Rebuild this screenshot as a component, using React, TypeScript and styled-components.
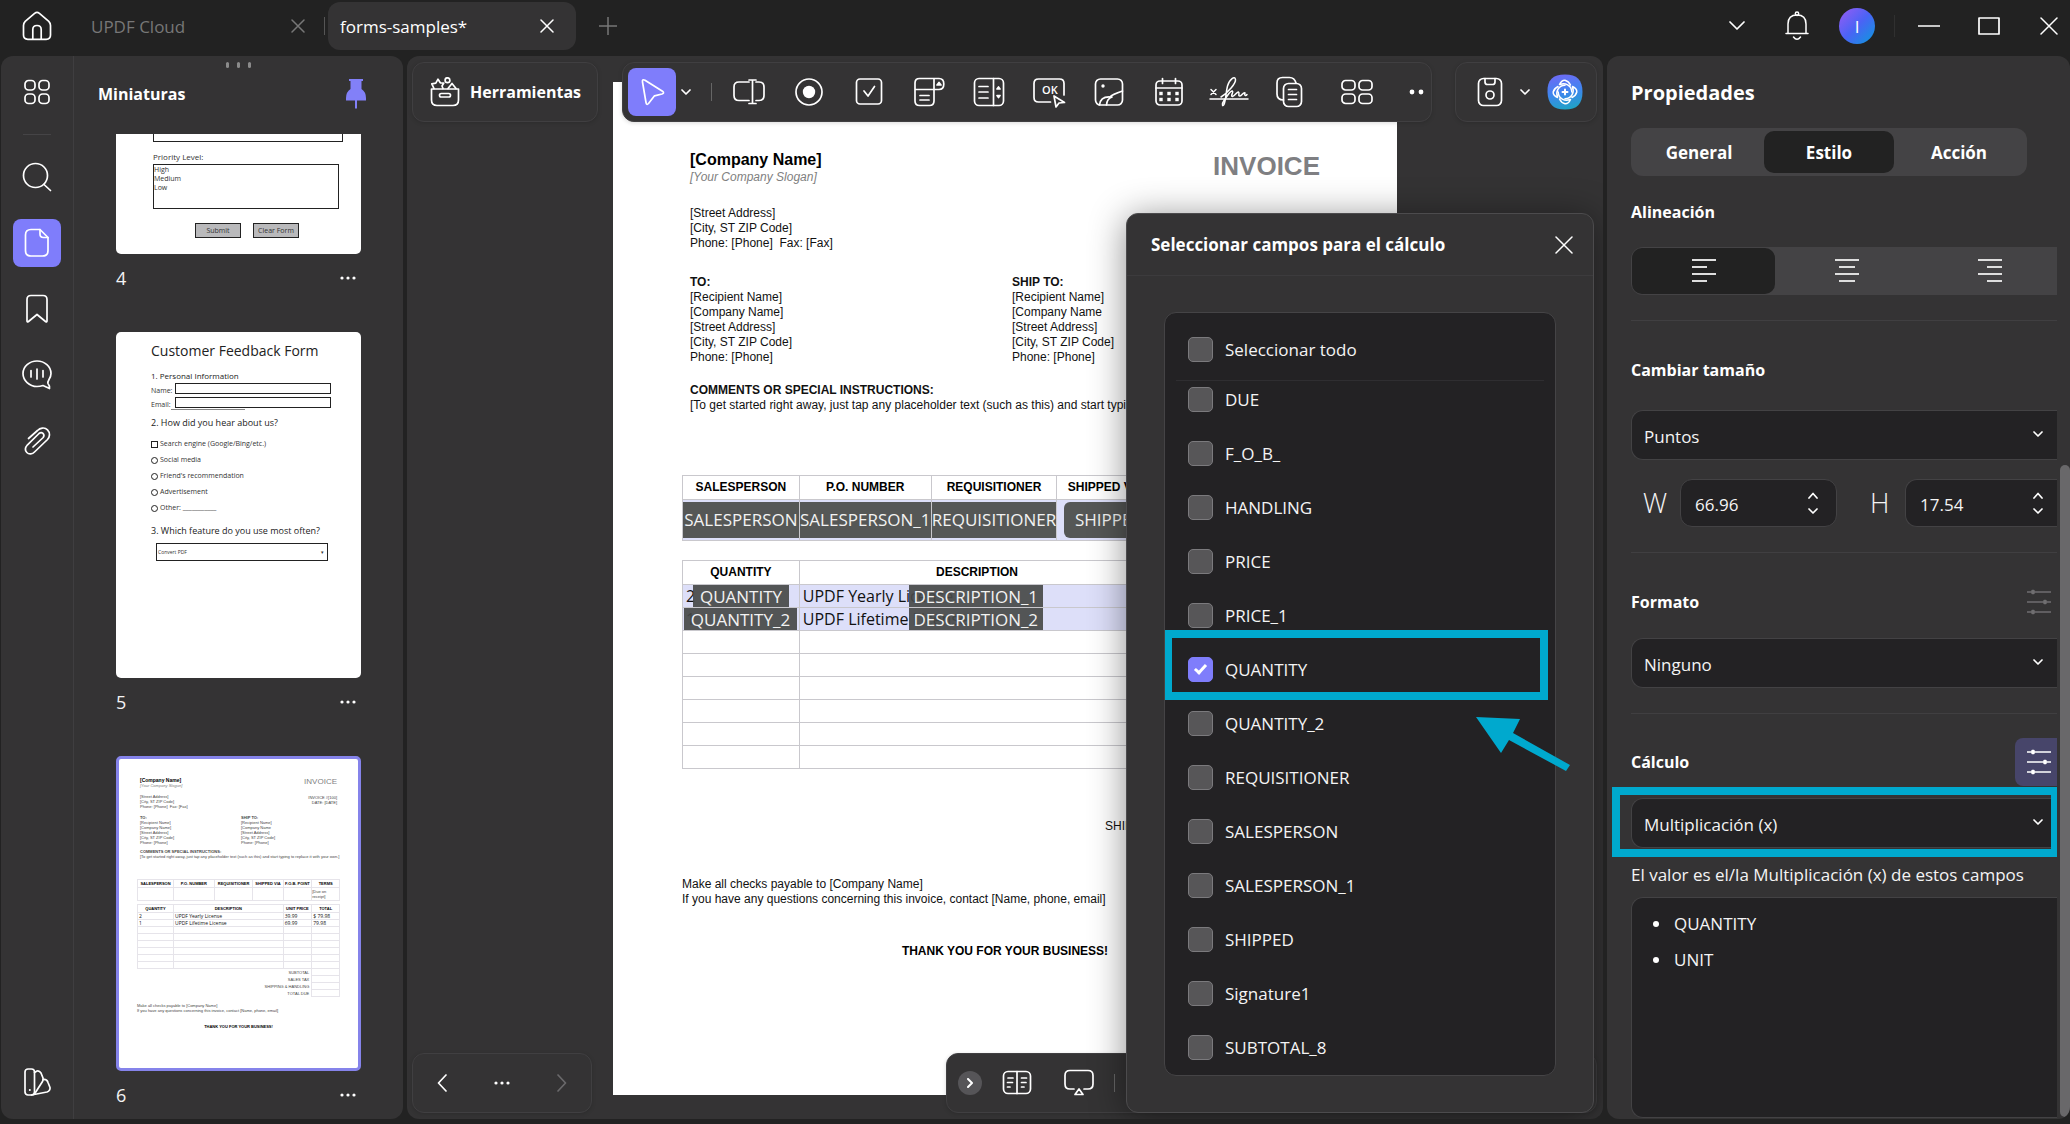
import React, { useState } from "react";
import styled, { createGlobalStyle, css, ThemeProvider } from "styled-components";

const UI = `"Open Sans", "Noto Sans", sans-serif`;
const DOC = `"Liberation Sans", Arial, sans-serif`;

const c = {
  bg: "#222222",
  panel: "#343334",
  line: "#434244",
  well: "#232224",
  accent: "#7f7dfb",
  mark: "#00a9ce",
  text: "#f4f4f4",
};

const GlobalStyle = createGlobalStyle`
  *, *::before, *::after { box-sizing: border-box; }
  html, body, #root { height: 100%; margin: 0; }
  body { background: ${c.bg}; color: ${c.text}; font-family: ${UI}; font-size: 17px; overflow: hidden; }
  button, input, select { font: inherit; color: inherit; }
  button { background: none; border: 0; padding: 0; margin: 0; flex: none; }
  svg { display: block; flex: none; }
  h1, h2, h3, p, ul, figure { margin: 0; padding: 0; }
`;

/* ---------- icons ---------- */

type IconProps = { w?: number; h?: number; sw?: number; color?: string; children: React.ReactNode };
const Icon = ({ w = 30, h = 30, sw = 1.7, color = "#fff", children }: IconProps) => (
  <svg width={w} height={h} viewBox={`0 0 ${w} ${h}`} fill="none" stroke={color} strokeWidth={sw} strokeLinecap="round" strokeLinejoin="round" aria-hidden="true">
    {children}
  </svg>
);

const Chevron = ({ dir = "down", color = "#fff", size = 10 }: { dir?: "down" | "up"; color?: string; size?: number }) => (
  <Icon w={size} h={size / 2 + 2} color={color}>
    {dir === "down" ? <path d={`M1 1L${size / 2} ${size / 2}L${size - 1} 1`} /> : <path d={`M1 ${size / 2 + 1}L${size / 2} 1.5L${size - 1} ${size / 2 + 1}`} />}
  </Icon>
);

const Cross = ({ size = 14, color = "#fff" }: { size?: number; color?: string }) => (
  <Icon w={size} h={size} color={color} sw={1.5}>
    <path d={`M1 1L${size - 1} ${size - 1}M${size - 1} 1L1 ${size - 1}`} />
  </Icon>
);

const Dots = ({ color = "#fff" }: { color?: string }) => (
  <Icon w={18} h={6} color={color}>
    {[3, 9, 15].map((x) => <circle key={x} cx={x} cy={3} r={1.6} fill={color} stroke="none" />)}
  </Icon>
);

const HomeIcon = () => (
  <Icon>
    <path d="M1.5 14.5Q1.5 12 3.2 10.3L12.6 2.3Q15 .4 17.4 2.3L26.8 10.3Q28.5 12 28.5 14.5V24Q28.5 28.3 24.2 28.3H5.8Q1.5 28.3 1.5 24Z" />
    <path d="M10.8 28V18.5Q10.8 14.5 15 14.5T19.2 18.5V28" />
  </Icon>
);
const GridIcon = ({ wide }: { wide?: boolean }) => (
  <Icon w={32} h={26}>
    {(wide ? [1, 18] : [4, 18]).map((x) =>
      [1.5, 15].map((y) => <rect key={`${x}-${y}`} x={x} y={y} width={wide ? 13 : 10} height={9.5} rx={3.6} />),
    )}
  </Icon>
);
const SearchIcon = () => (
  <Icon><circle cx="13.5" cy="13.5" r="12" /><path d="M22 22.5L28.5 28.5" /></Icon>
);
const PageIcon = () => (
  <Icon>
    <path d="M18 1.5H9Q3.5 1.5 3.5 7V22.5Q3.5 28 9 28H20.5Q26 28 26 22.5V9.5Z" />
    <path d="M18 1.5V6Q18 9.5 21.5 9.5H26" />
  </Icon>
);
const BookmarkIcon = () => (
  <Icon><path d="M5 27V5.5Q5 1.5 9 1.5H21Q25 1.5 25 5.5V27Q25 28.5 23.5 27.5L15 20.5L6.5 27.5Q5 28.5 5 27Z" /></Icon>
);
const CommentIcon = () => (
  <Icon>
    <path d="M27 19.5Q29 16.500 29 13.5C29 6.6 22.7 1 15 1S1 6.6 1 13.5S7.3 26.5 15 26.5Q18 26.5 21 25.5L27.5 28.5Q28 26 26 23.5Q25.5 22 27 19.5Z" />
    <path d="M9 10.5V17M15 9V19M21 10.5V17" />
  </Icon>
);
const ClipIcon = () => (
  <Icon>
    <path d="M6.5 12.5L15.5 4.5C18 2 22.5 .8 25.5 3.8S27.8 11 25.5 13.5L12.5 26C10.5 28.2 7 28.8 4.8 26.5S3.6 21 5.5 18.8L17 7.5Q19.2 5.7 21 7.4T21.2 11.5L11 21" />
  </Icon>
);
const SwatchIcon = () => (
  <Icon>
    <rect x="3" y="2" width="9.5" height="26" rx="3" />
    <circle cx="7.8" cy="23" r="1" fill="#fff" stroke="none" />
    <path d="M12.5 5.5L15 4Q17.5 3.5 19 6L21 11Q21.5 13 20.5 14.5L12.5 27" />
    <path d="M21 12.5Q25 12 26 15.5L28 20.5Q28.5 23.5 25 25L9.5 28" />
  </Icon>
);
const PinIcon = () => (
  <svg width="20" height="30" viewBox="0 0 20 30" fill="#8280f8" aria-hidden="true">
    <path d="M3 0H17V2H15.5V10Q20 13 20 19V21.500H11V29.5H9V21.5H0V19Q0 13 4.5 10V2H3Z" />
  </svg>
);
const ToolboxIcon = () => (
  <Icon>
    <path d="M1.5 12H28.5V23Q28.5 28.5 23 28.5H7Q1.5 28.5 1.5 23Z" />
    <rect x="9.5" y="16.5" width="11" height="3.5" rx="1.7" />
    <path d="M4 11.5L1.8 6.8L5.8 6.2L8 2.2L10.3 5.8L13.8 6L12 9L13 11.5M18 11.5L22 6.5L26 11.500" />
    <circle cx="17.5" cy="3.2" r="2.4" />
  </Icon>
);
const PointerIcon = () => (
  <Icon><path d="M5.5 5Q5 1.8 8 3.2L25.500 14.2Q27.8 16 25 17L17.5 18.8L11.5 26.5Q9.5 28.5 9 25.500Z" /></Icon>
);
const TextFieldIcon = () => (
  <Icon w={34}>
    <path d="M17 5H7Q2 5 2 10V18.500Q2 23.5 7 23.5H17M24 5H27Q32 5 32 10V18.5Q32 23.500 27 23.5H24M17 3H24M17 26.5H24M20.5 3V26.5" />
  </Icon>
);
const RadioIcon = () => (
  <Icon><circle cx="15" cy="15" r="13" /><circle cx="15" cy="15" r="6.2" fill="#fff" stroke="none" /></Icon>
);
const CheckIcon = () => (
  <Icon><rect x="2.5" y="2" width="25" height="25" rx="3.5" /><path d="M10 14L14 19L20.5 9.5" /></Icon>
);
const ComboIcon = () => (
  <Icon w={32}>
    <path d="M26 12.5H2V6Q2 1.500 6.5 1.5H26Q30.8 1.5 30.8 7T26 12.5M21 1.5V12.5M2 12.5V24Q2 28.5 6.5 28.5H16.5Q21 28.5 21 24V12.5M7 18.5H16M7 23H16" />
    <path d="M24 8L26 5.5L28 8Z" fill="#fff" />
  </Icon>
);
const ListIcon = () => (
  <Icon w={32}>
    <rect x="1.5" y="1.5" width="29" height="27" rx="4.5" />
    <path d="M20.5 1.5V28.5M6 9.5H15M6 15H15M6 21H15" />
    <path d="M24 12L25.5 10L27 12ZM24 18.5L25.5 20.5L27 18.500Z" fill="#fff" />
  </Icon>
);
const OkText = styled.text`
  font: 600 11px ${UI};
  fill: #fff;
  stroke: none;
`;
const OkIcon = () => (
  <Icon w={34} h={32}>
    <path d="M18.5 26H6.5Q2 26 2 21.5V7.5Q2 3 6.5 3H27.5Q32 3 32 7.5V19" />
    <OkText x="10" y="18">OK</OkText>
    <path d="M22 20L24 31L27 27L32.5 26.5Z" fill={c.panel} />
  </Icon>
);
const ImageIcon = () => (
  <Icon>
    <rect x="1.5" y="2" width="27" height="26" rx="5" />
    <circle cx="9" cy="9" r="1.7" fill="#fff" stroke="none" />
    <path d="M5.5 28Q6.5 19.5 16 20Q18 17.5 28.5 14M12.5 28Q13 21.5 18 20" />
  </Icon>
);
const CalendarIcon = () => (
  <Icon>
    <rect x="2" y="4" width="26" height="24" rx="4" /><path d="M2 11H28M8.5 1.5V6.5M21.5 1.5V6.5" />
    {[7, 15, 23].map((x) => [16.5, 22.5].map((y) => <rect key={`${x}${y}`} x={x - 1.7} y={y - 1.7} width="3.4" height="3.4" fill="#fff" stroke="none" />))}
  </Icon>
);
const SignIcon = () => (
  <Icon w={40} h={32} sw={1.5}>
    <path d="M2 13.5L7 18.5M7 13.5L2 18.5M1 23H39" />
    <path d="M12 21C19 17 27 7 26.5 3.5C26 -.5 20.5 3 18.5 10C16.5 18 17 24 15 28.5C13.5 31.500 12.5 28 15 24.500C19 19 21 14.5 23.5 15C25 16 21 20 23.5 20.5C26 20 28 15.5 29.5 16C31 17 28.500 20 31 20C33 20 34 16 36 17C35 20 37 20 38 18.5" />
  </Icon>
);
const CopyIcon = () => (
  <Icon h={32}>
    <path d="M9.5 24Q3 24 3 18V7Q3 1.500 8.5 1.5H15.5Q20.5 1.5 22 7" />
    <rect x="9.5" y="7.5" width="18" height="23" rx="5" /><path d="M14.5 13.5H22.5M14.5 18.5H22.5M14.5 23.5H22.5" />
  </Icon>
);
const SaveIcon = () => (
  <Icon w={26}>
    <rect x="1.5" y="1.5" width="23" height="27" rx="5" /><path d="M8 1.5V5Q8 7.500 10.5 7.5H15.5Q18 7.5 18 5V1.5" /><circle cx="13" cy="18" r="4" />
  </Icon>
);
const AiIcon = () => (
  <svg width="36" height="36" viewBox="0 0 36 36" fill="none" aria-hidden="true">
    <defs>
      <linearGradient id="ai" x1="0.4" y1="0" x2="0.6" y2="1"><stop offset="0" stopColor="#6d6bf5" /><stop offset=".5" stopColor="#3f86ef" /><stop offset="1" stopColor="#1fa3c4" /></linearGradient>
    </defs>
    <path d="M18 .5C30 .5 35.5 6 35.5 18S30 35.5 18 35.500S1 30 .5 18S6 .5 18 .5Z" fill="url(#ai)" />
    <g stroke="#fff" strokeWidth="1.5" strokeLinecap="round" strokeLinejoin="round">
      {[0, 90, 180, 270].map((a) => <path key={a} transform={`rotate(${a} 18 18)`} d="M12.500 10.500Q14.500 6 18 6.200Q21.500 7 23.500 11M13 10.500C18 8.500 24.500 11 24.800 18" />)}
      <path d="M18 15.5V20.5M15.5 18H20.5" strokeWidth="2" />
    </g>
  </svg>
);
const BellIcon = () => (
  <Icon w={24} sw={1.5}>
    <path d="M1 22.5H23M3 22.5V13Q3 4 12 4T21 13V22.5M8.5 26Q12 30.5 15.5 26" /><circle cx="12" cy="2.7" r="1.7" />
  </Icon>
);
const BookIcon = () => (
  <Icon h={26}>
    <rect x="1.5" y="1.5" width="27" height="22" rx="4.5" />
    <path d="M15 1.5V23.5M6 8H11M5.5 12.500H10.5M5.5 17H8M19.5 8H24.5M19.5 12.500H24M19.5 17H22" />
  </Icon>
);
const PresentIcon = () => (
  <Icon h={28}>
    <path d="M10 20H6Q1 20 1 15V6.5Q1 1.5 6 1.5H24Q29 1.5 29 6.5V15Q29 20 24 20H20M15 20L19 25.5H11Z" />
  </Icon>
);
const SlidersIcon = ({ color = "#fff" }: { color?: string }) => (
  <Icon w={24} h={26} color={color} sw={1.7}>
    <path d="M0 3H24M0 13H24M0 23H24" strokeLinecap="butt" />
    {[[6, 3], [18, 13], [6, 23]].map(([x, y]) => <rect key={y} x={x - 1.7} y={y - 2.2} width="3.4" height="4.4" rx="1" fill={color} stroke="none" />)}
  </Icon>
);
const AlignIcon = ({ rows }: { rows: number[][] }) => (
  <Icon w={24} h={26} color="#dedede" sw={2}>
    {rows.map(([a, b], i) => <path key={i} d={`M${a} ${2 + i * 7}H${b}`} strokeLinecap="butt" />)}
  </Icon>
);

/* ---------- shell ---------- */

const Shell = styled.div`
  display: flex;
  flex-direction: column;
  height: 100vh;
  background: ${c.bg};
`;
const TitleBar = styled.header`
  display: flex;
  align-items: center;
  height: 52px;
  flex: none;
  padding-left: 22px;
  margin-bottom: 4px;
`;
const Tab = styled.div<{ $active?: boolean }>`
  display: flex;
  align-items: center;
  justify-content: space-between;
  width: ${(p) => (p.$active ? 248 : 242)}px;
  height: 48px;
  padding: 0 ${(p) => (p.$active ? 22 : 16)}px 0 12px;
  border-radius: 12px;
  color: ${(p) => (p.$active ? "#fff" : "#777")};
  background: ${(p) => (p.$active ? c.panel : "transparent")};
`;
const Tabs = styled.nav`
  display: flex;
  align-items: center;
  margin-left: 27px;
  gap: 3px;
  flex: 1;
`;
const VLine = styled.span<{ $h: number }>`
  width: 1px;
  height: ${(p) => p.$h}px;
  background: #555;
  flex: none;
`;
const NewTab = styled.button`
  padding: 0 20px;
`;
const WindowGroup = styled.div`
  display: flex;
  align-items: center;
  gap: 18px;
`;
const WindowButton = styled.button`
  display: grid;
  place-items: center;
  width: 42px;
  height: 42px;
`;
const WindowSep = styled.span`
  width: 1px;
  height: 22px;
  margin: 0 13px 0 16px;
  background: #303030;
`;
const Avatar = styled.span`
  display: grid;
  place-items: center;
  width: 36px;
  height: 36px;
  border-radius: 50%;
  color: #fff;
  background: linear-gradient(135deg, #9a5cf4, #4a63f5 50%, #0a9bdc);
`;
const Body = styled.div`
  display: flex;
  flex: 1;
  min-height: 0;
  padding: 0 0 5px 1px;
  gap: 4px;
`;
const LeftPanel = styled.div`
  display: flex;
  width: 402px;
  flex: none;
  background: ${c.panel};
  border-radius: 12px;
  overflow: hidden;
`;
const Rail = styled.nav`
  display: flex;
  flex-direction: column;
  align-items: center;
  gap: 18px;
  width: 73px;
  padding: 12px 0 13px;
  border-right: 1px solid #3f3e40;
`;
const RailButton = styled.button<{ $active?: boolean; $last?: boolean }>`
  display: grid;
  place-items: center;
  width: 48px;
  height: 48px;
  border-radius: 8px;
  background: ${(p) => (p.$active ? c.accent : "transparent")};
  margin-top: ${(p) => (p.$last ? "auto" : "0")};
`;
const RailLine = styled.span`
  width: 28px;
  height: 1px;
  background: #454446;
`;

const Thumbs = styled.aside`
  display: flex;
  flex-direction: column;
  flex: 1;
  min-width: 0;
`;
const ThumbHead = styled.div`
  height: 78px;
  flex: none;
`;
const Handle = styled.div`
  display: flex;
  justify-content: center;
  gap: 8px;
  height: 18px;
  padding-top: 6px;
  span { width: 3px; height: 6px; border-radius: 2px; background: #8b8b8b; }
`;
const ThumbTitle = styled.div`
  display: flex;
  align-items: center;
  justify-content: space-between;
  height: 40px;
  padding: 0 37px 0 24px;
`;
const Heading = styled.h2<{ $size?: number }>`
  font-size: ${(p) => p.$size || 16}px;
  line-height: 24px;
  font-weight: 700;
  color: #fff;
`;
const ThumbList = styled.div`
  flex: 1;
  min-height: 0;
  overflow: hidden;
  padding: 0 42px;
`;
const Sheet = styled.div<{ $h: number; $selected?: boolean; $cut?: boolean }>`
  height: ${(p) => p.$h}px;
  overflow: hidden;
  background: #fff;
  color: #333;
  border-radius: ${(p) => (p.$cut ? "0 0 5px 5px" : "5px")};
  ${(p) => p.$selected && css`border: 3px solid #8583ea;`}
`;
const Caption = styled.figcaption`
  display: flex;
  align-items: center;
  justify-content: space-between;
  height: 48px;
  margin-bottom: 30px;
  padding-right: 4px;
  font-size: 18px;
`;

/* page 4 preview */
const TicketPage = styled.div`
  padding: 0 20px 0 37px;
  font-size: 8px;
  line-height: 10px;
`;
const TicketTop = styled.div`
  height: 8px;
  width: 190px;
  border: 1px solid #222;
  border-top: 0;
  margin-bottom: 10px;
`;
const TicketBox = styled.div`
  width: 186px;
  height: 45px;
  margin-top: 2px;
  border: 1px solid #222;
  font-size: 7px;
  line-height: 9px;
`;
const TicketActions = styled.div`
  display: flex;
  gap: 12px;
  padding: 14px 0 0 42px;
  span {
    width: 46px;
    height: 15px;
    border: 1px solid #222;
    background: #b9b9bb;
    font-size: 7px;
    line-height: 13px;
    text-align: center;
  }
`;

/* page 5 preview */
const FeedbackPage = styled.div`
  padding: 10px 30px 0 35px;
  font-size: 7px;
  line-height: 10px;
`;
const FTitle = styled.div`
  font-size: 14px;
  line-height: 18px;
  color: #222;
  white-space: nowrap;
`;
const FQuestion = styled.div<{ $size: number; $mt: number }>`
  margin-top: ${(p) => p.$mt}px;
  font-size: ${(p) => p.$size}px;
  line-height: 12px;
  color: #222;
  white-space: nowrap;
`;
const FLine = styled.div<{ $ruled?: boolean }>`
  position: relative;
  display: flex;
  align-items: flex-end;
  justify-content: space-between;
  height: 14px;
  span { width: 156px; height: 11px; border: 1px solid #222; margin-bottom: 2px; }
  ${(p) => p.$ruled && css`
    &::after { content: ""; position: absolute; left: 20px; bottom: 0; width: 74px; height: 1px; background: #888; }
  `}
`;
const FOptions = styled.div`
  display: grid;
  gap: 6px;
  margin: 10px 0 12px;
  line-height: 10px;
`;
const FOption = styled.div<{ $round?: boolean }>`
  display: flex;
  align-items: center;
  gap: 2px;
  &::before {
    content: "";
    width: 7px;
    height: 7px;
    border: 1px solid #222;
    border-radius: ${(p) => (p.$round ? "50%" : "0")};
  }
`;
const FSelect = styled.div`
  display: flex;
  justify-content: space-between;
  margin: 6px 0 0 5px;
  padding: 0 3px 0 1px;
  height: 18px;
  width: 172px;
  border: 1px solid #222;
  font-size: 5px;
  line-height: 16px;
`;

/* ---------- invoice document: one component at page and preview size ---------- */

const fullSize = {
  padTop: 69, padX: 77, tableL: 69, tableR: 59, company: 16, companyLh: 18, text: 12, lh: 15, slogan: 16, title: 26, titleLh: 30, titleW: 700, metaGap: 28,
  gapAddr: 21, gapTo: 24, shipLeft: 322, gapComments: 18, gapTable: 62, head: 24, fieldRow: 41, gapTables: 19, row: 23, value: 16,
  gapChecks: 16, gapThanks: 37, pad: 3, sumPad: 8, ink: "#111", rule: "#c9c8cd", tint: "#dddff9",
};
const miniSize: typeof fullSize = {
  padTop: 18, padX: 21, tableL: 18, tableR: 18, company: 5, companyLh: 6, text: 4, lh: 5, slogan: 5, title: 8, titleLh: 10, titleW: 400, metaGap: 8,
  gapAddr: 6, gapTo: 6, shipLeft: 101, gapComments: 4, gapTable: 20, head: 8, fieldRow: 13, gapTables: 3, row: 7, value: 5,
  gapChecks: 6, gapThanks: 11, pad: 1, sumPad: 2, ink: "#444", rule: "#e6e4ea", tint: "#fff",
};
const t = (k: keyof typeof fullSize) => (p: any) => (typeof p.theme[k] === "number" ? `${p.theme[k]}px` : p.theme[k]);

const InvoiceDoc = styled.article`
  padding-top: ${t("padTop")};
  font: ${t("text")}/${t("lh")} ${DOC};
  color: ${t("ink")};
  white-space: nowrap;
  b { display: block; }
`;
const InvHead = styled.div`
  display: flex;
  justify-content: space-between;
  padding: 0 ${t("padX")};
`;
const Company = styled.div`
  font-size: ${t("company")};
  line-height: ${t("companyLh")};
  font-weight: 700;
  color: #000;
`;
const Slogan = styled.div`
  font-style: italic;
  line-height: ${t("slogan")};
  margin-bottom: ${t("gapAddr")};
  color: #808080;
`;
const InvTitle = styled.div`
  font-size: ${t("title")};
  line-height: ${t("titleLh")};
  font-weight: ${(p: any) => p.theme.titleW};
  color: #7f7f82;
`;
const InvMeta = styled.div`
  text-align: right;
  p { margin-top: ${t("metaGap")}; }
`;
const Parties = styled.div`
  display: grid;
  grid-template-columns: ${t("shipLeft")} 1fr;
  margin: ${t("gapTo")} 0 ${t("gapComments")};
  padding-left: ${t("padX")};
`;
const Comments = styled.div`
  padding-left: ${t("padX")};
  margin-bottom: ${t("gapTable")};
`;
const TableBox = styled.div<{ $last?: boolean }>`
  padding: 0 ${t("tableR")} 0 ${t("tableL")};
  margin-bottom: ${(p: any) => (p.$last ? 0 : p.theme.gapTables)}px;
`;
const InvTable = styled.table`
  width: 100%;
  table-layout: fixed;
  border-collapse: collapse;
  th, td { border: 1px solid; border-color: ${t("rule")}; padding: 0; }
  th { height: ${t("head")}; line-height: ${t("lh")}; font-weight: 700; color: #000; text-align: center; }
`;
const FieldCell = styled.td`
  height: ${t("fieldRow")};
  background: ${t("tint")};
  vertical-align: middle;
  white-space: normal;
`;
const ItemCell = styled.td<{ $tint?: boolean }>`
  position: relative;
  height: ${t("row")};
  background: ${(p: any) => (p.$tint ? p.theme.tint : "#fff")};
`;
const Value = styled.div`
  font-family: ${UI};
  font-size: ${t("value")};
  line-height: ${t("lh")};
  padding-left: ${t("pad")};
  color: #111;
`;
const SumLabel = styled.td<{ $first?: boolean }>`
  height: ${t("row")};
  text-align: right;
  && {
    border-color: transparent;
    border-right-color: ${t("rule")};
    border-top-color: ${(p: any) => (p.$first ? p.theme.rule : "transparent")};
    padding-right: ${t("sumPad")};
  }
`;
const CellTag = styled.div<{ $left?: boolean }>`
  display: flex;
  align-items: center;
  justify-content: center;
  height: 36px;
  margin-left: ${(p) => (p.$left ? 7 : 0)}px;
  border-radius: ${(p) => (p.$left ? 6 : 0)}px;
  background: #555756;
  color: #f2f2f2;
  font: 17px/24px ${UI};
  white-space: nowrap;
`;
const FloatTag = styled.div<{ $x: number; $w: number }>`
  position: absolute;
  left: ${(p) => p.$x}px;
  top: 0;
  width: ${(p) => p.$w}px;
  height: 22px;
  overflow: hidden;
  background: rgba(70, 73, 72, 0.92);
  color: #f2f2f2;
  font: 17px/24px ${UI};
  text-align: center;
`;
const Checks = styled.div`
  padding-left: ${t("tableL")};
  margin-top: ${t("gapChecks")};
`;
const Thanks = styled.div`
  margin-top: ${t("gapThanks")};
  text-align: center;
  font-weight: 700;
  color: #000;
`;

const Columns = ({ widths }: { widths: number[] }) => (
  <colgroup>{widths.map((w, i) => <col key={i} style={{ width: `${(w / 656) * 100}%` }} />)}</colgroup>
);

const Invoice = ({ editing }: { editing?: boolean }) => {
  const tag = (name: string, rounded?: boolean) => editing && <CellTag $left={rounded}>{name}</CellTag>;
  const items = [
    { q: "2", d: "UPDF Yearly License", u: "39.99", s: "$ 79.98", qx: 10, qw: 96, qt: "QUANTITY", dt: "DESCRIPTION_1" },
    { q: "1", d: "UPDF Lifetime License", u: "69.99", s: "79.98", qx: 1, qw: 113, qt: "QUANTITY_2", dt: "DESCRIPTION_2" },
  ];
  return (
    <ThemeProvider theme={(editing ? fullSize : miniSize) as any}>
      <InvoiceDoc>
        <InvHead>
          <div>
            <Company>[Company Name]</Company>
            <Slogan>[Your Company Slogan]</Slogan>
            <div>[Street Address]</div>
            <div>[City, ST ZIP Code]</div>
            <div>Phone: [Phone]&nbsp; Fax: [Fax]</div>
          </div>
          <InvMeta>
            <InvTitle>INVOICE</InvTitle>
            {!editing && <p>INVOICE #[100]<br />DATE: [DATE]</p>}
          </InvMeta>
        </InvHead>
        <Parties>
          <div><b>TO:</b>[Recipient Name]<br />[Company Name]<br />[Street Address]<br />[City, ST ZIP Code]<br />Phone: [Phone]</div>
          <div><b>SHIP TO:</b>[Recipient Name]<br />[Company Name<br />[Street Address]<br />[City, ST ZIP Code]<br />Phone: [Phone]</div>
        </Parties>
        <Comments>
          <b>COMMENTS OR SPECIAL INSTRUCTIONS:</b>
          [To get started right away, just tap any placeholder text (such as this) and start typing to replace it with your own.]
        </Comments>
        <TableBox>
          <InvTable>
            <Columns widths={[117, 132, 126, 98, 93, 90]} />
            <thead><tr><th>SALESPERSON</th><th>P.O. NUMBER</th><th>REQUISITIONER</th><th>SHIPPED VIA</th><th>F.O.B. POINT</th><th>TERMS</th></tr></thead>
            <tbody>
              <tr>
                <FieldCell>{tag("SALESPERSON")}</FieldCell>
                <FieldCell>{tag("SALESPERSON_1")}</FieldCell>
                <FieldCell>{tag("REQUISITIONER")}</FieldCell>
                <FieldCell>{tag("SHIPPED", true)}</FieldCell>
                <FieldCell />
                <FieldCell>[Due on receipt]</FieldCell>
              </tr>
            </tbody>
          </InvTable>
        </TableBox>
        <TableBox $last>
          <InvTable>
            <Columns widths={[117, 356, 93, 90]} />
            <thead><tr><th>QUANTITY</th><th>DESCRIPTION</th><th>UNIT PRICE</th><th>TOTAL</th></tr></thead>
            <tbody>
              {items.map((it) => (
                <tr key={it.qt}>
                  <ItemCell $tint><Value>{it.q}</Value>{editing && <FloatTag $x={it.qx} $w={it.qw}>{it.qt}</FloatTag>}</ItemCell>
                  <ItemCell $tint><Value>{it.d}</Value>{editing && <FloatTag $x={109} $w={134}>{it.dt}</FloatTag>}</ItemCell>
                  <ItemCell $tint><Value>{it.u}</Value></ItemCell>
                  <ItemCell $tint><Value>{it.s}</Value></ItemCell>
                </tr>
              ))}
              {[3, 4, 5, 6, 7, 8].map((r) => (
                <tr key={r}><ItemCell /><ItemCell /><ItemCell /><ItemCell /></tr>
              ))}
              {["SUBTOTAL", "SALES TAX", "SHIPPING & HANDLING", "TOTAL DUE"].map((s, i) => (
                <tr key={s}><SumLabel colSpan={3} $first={i === 0}>{s}</SumLabel><ItemCell /></tr>
              ))}
            </tbody>
          </InvTable>
        </TableBox>
        <Checks>
          Make all checks payable to [Company Name]<br />
          If you have any questions concerning this invoice, contact [Name, phone, email]
        </Checks>
        <Thanks>THANK YOU FOR YOUR BUSINESS!</Thanks>
      </InvoiceDoc>
    </ThemeProvider>
  );
};

/* ---------- stage ---------- */

const Stage = styled.main`
  position: relative;
  flex: 1;
  min-width: 0;
  background: ${c.panel};
  border-radius: 12px;
  overflow: hidden;
  padding: 26px 0 24px;
`;
const Paper = styled.div`
  width: 784px;
  height: 100%;
  margin: 0 auto;
  background: #fff;
  overflow: hidden;
`;
const FloatRow = styled.div<{ $bottom?: boolean }>`
  position: absolute;
  left: 5px;
  right: 6px;
  ${(p) => (p.$bottom ? "bottom: 6px;" : "top: 6px;")}
  display: flex;
  justify-content: space-between;
`;
const Bar = styled.div<{ $w: number }>`
  display: flex;
  align-items: center;
  width: ${(p) => p.$w}px;
  height: 60px;
  border: 1px solid #403f41;
  border-radius: 12px;
  background: ${c.panel};
  box-shadow: 0 1px 4px rgba(0, 0, 0, 0.15);
  overflow: hidden;
`;
const ToolsButton = styled.button`
  display: flex;
  align-items: center;
  gap: 10px;
  padding-left: 17px;
  font-weight: 700;
  color: #fff;
`;
const PointerButton = styled.button`
  display: grid;
  place-items: center;
  width: 48px;
  height: 48px;
  margin: 0 5px;
  border-radius: 8px;
  background: ${c.accent};
`;
const BarTools = styled.div`
  display: flex;
  gap: 20px;
  margin-left: 17px;
  flex: none;
`;
const ToolButton = styled.button<{ $gap?: boolean }>`
  display: grid;
  place-items: center;
  width: 40px;
  height: 40px;
  margin-left: ${(p) => (p.$gap ? 8 : 0)}px;
`;
const SmallSep = styled.span`
  flex: none;
  width: 1px;
  height: 18px;
  margin-left: 20px;
  background: #666;
`;
const SaveBar = styled(Bar)`
  gap: 17px;
  padding-left: 21px;
`;
const PagerBar = styled(Bar)`
  justify-content: space-between;
  padding: 0 24px;
`;
const ViewBar = styled(Bar)`
  padding-left: 11px;
`;
const RoundButton = styled.button`
  display: grid;
  place-items: center;
  width: 24px;
  height: 24px;
  margin-right: 20px;
  border-radius: 50%;
  background: #565558;
`;
const ViewTools = styled.div`
  display: flex;
  align-items: center;
  gap: 32px;
`;

/* ---------- dialog ---------- */

const Dialog = styled.section`
  position: absolute;
  top: 157px;
  right: 9px;
  bottom: 6px;
  width: 468px;
  display: flex;
  flex-direction: column;
  border: 1px solid #4c4b4d;
  border-radius: 12px;
  background: ${c.panel};
  box-shadow: 0 4px 36px rgba(0, 0, 0, 0.45);
`;
const DialogHead = styled.header`
  display: flex;
  align-items: center;
  justify-content: space-between;
  height: 62px;
  flex: none;
  padding: 0 20px 0 24px;
  border-bottom: 1px solid #3c3b3d;
`;
const FieldBox = styled.div`
  flex: 1;
  min-height: 0;
  overflow: hidden;
  margin: 36px 37px;
  border: 1px solid #454446;
  border-radius: 12px;
  background: ${c.well};
`;
const SelectAll = styled.div`
  margin: 0 11px;
  padding: 24px 0 18px 12px;
  border-bottom: 1px solid #2f2e31;
`;
const FieldList = styled.div`
  display: grid;
  gap: 29px;
  padding: 6px 0 0 23px;
`;
const FieldRow = styled.label`
  position: relative;
  display: flex;
  align-items: center;
  gap: 12px;
  height: 25px;
`;
const Check = styled.input`
  appearance: none;
  display: grid;
  place-items: center;
  width: 25px;
  height: 25px;
  margin: 0;
  border: 1px solid #7b7a7d;
  border-radius: 5px;
  background: #575658;
  &:checked { background: ${c.accent}; border-color: ${c.accent}; }
  &:checked::after {
    content: "";
    width: 7px;
    height: 12px;
    margin-bottom: 3px;
    border: solid #fff;
    border-width: 0 3px 3px 0;
    transform: rotate(42deg);
  }
`;
const RowMark = styled.span`
  position: absolute;
  left: -24px;
  top: -27px;
  width: 384px;
  height: 70px;
  border: 8px solid ${c.mark};
  pointer-events: none;
`;
const ArrowMark = styled.svg`
  position: absolute;
  right: 23px;
  top: 503px;
`;

/* ---------- properties ---------- */

const Props = styled.aside`
  display: flex;
  width: 463px;
  flex: none;
  background: ${c.panel};
  border-radius: 12px;
  overflow: hidden;
`;
const PropsBody = styled.div`
  display: flex;
  flex-direction: column;
  width: 450px;
  padding-left: 24px;
  overflow: hidden;
`;
const PropsTitle = styled.h1`
  margin: 23px 0 21px;
  font-size: 20px;
  line-height: 28px;
  font-weight: 700;
  color: #fff;
`;
const Segments = styled.div<{ $wide?: boolean }>`
  display: grid;
  grid-template-columns: repeat(3, ${(p) => (p.$wide ? 143 : 130)}px);
  flex: none;
  width: ${(p) => (p.$wide ? "auto" : "396px")};
  height: 48px;
  padding: ${(p) => (p.$wide ? 1 : 3)}px;
  border-radius: ${(p) => (p.$wide ? "12px 0 0 12px" : "12px")};
  background: #444345;
`;
const Segment = styled.button<{ $active?: boolean }>`
  display: grid;
  place-items: center;
  font-weight: 700;
  color: #fff;
  border-radius: 10px;
  background: ${(p) => (p.$active ? c.bg : "transparent")};
`;
const Section = styled.section<{ $last?: boolean }>`
  display: flex;
  flex-direction: column;
  padding-bottom: 25px;
  border-bottom: 1px solid #403f41;
  flex: none;
  ${(p) => p.$last && css`border: 0; padding: 0; flex: 1; min-height: 0;`}
`;
const SectionHead = styled.div<{ $top: number; $bottom: number }>`
  display: flex;
  align-items: center;
  justify-content: space-between;
  flex: none;
  height: 48px;
  margin: ${(p) => p.$top}px 0 ${(p) => p.$bottom}px;
`;
const OptionsButton = styled.button<{ $active?: boolean }>`
  display: grid;
  place-items: center end;
  width: 42px;
  height: 48px;
  padding-right: 6px;
  border-radius: 8px 0 0 8px;
  background: ${(p) => (p.$active ? "#47456a" : "transparent")};
`;
const SelectBox = styled.div`
  position: relative;
  flex: none;
  height: 50px;
  svg { position: absolute; right: 14px; top: 21px; pointer-events: none; }
`;
const Select = styled.select`
  appearance: none;
  width: 100%;
  height: 50px;
  padding: 2px 12px 0;
  border: 1px solid ${c.line};
  border-right: 0;
  border-radius: 12px 0 0 12px;
  background: ${c.well};
`;
const SelectMark = styled.span`
  position: absolute;
  left: -19px;
  top: -11px;
  right: -2px;
  height: 70px;
  border: 8px solid ${c.mark};
  pointer-events: none;
`;
const SizeRow = styled.div`
  display: grid;
  grid-template-columns: 49px 157px 68px minmax(0, 1fr);
  align-items: center;
  margin-top: 19px;
`;
const SizeLabel = styled.label<{ $end?: boolean }>`
  font-size: 27px;
  line-height: 36px;
  font-weight: 300;
  padding-left: ${(p) => (p.$end ? 33 : 12)}px;
`;
const NumberBox = styled.div<{ $cut?: boolean }>`
  display: flex;
  align-items: center;
  height: 48px;
  padding: 0 ${(p) => (p.$cut ? 14 : 18)}px 0 14px;
  border: 1px solid ${c.line};
  border-radius: 12px;
  ${(p) => p.$cut && css`border-right: 0; border-radius: 12px 0 0 12px;`}
  background: ${c.well};
  input { flex: 1; min-width: 0; border: 0; padding: 2px 0 0; background: none; }
`;
const Stepper = styled.div`
  display: grid;
  gap: 9px;
`;
const StepButton = styled.button`
  display: block;
`;
const Note = styled.p`
  margin: 15px 0 10px;
  line-height: 24px;
  white-space: nowrap;
`;
const FieldsUsed = styled.ul`
  flex: 1;
  margin-bottom: 1px;
  border: 1px solid ${c.line};
  border-right: 0;
  border-radius: 12px 0 0 12px;
  background: ${c.well};
  list-style: none;
  line-height: 36px;
  && { padding: 8px 0 0 42px; }
`;
const UsedField = styled.li`
  position: relative;
  &::before {
    content: "";
    position: absolute;
    left: -21px;
    top: 15px;
    width: 6px;
    height: 6px;
    border-radius: 50%;
    background: #fff;
  }
`;
const Scroller = styled.div`
  width: 10px;
  margin: 409px 0 2px auto;
  border-radius: 5px;
  background: #69686a;
`;

const fieldNames = ["DUE", "F_O_B_", "HANDLING", "PRICE", "PRICE_1", "QUANTITY", "QUANTITY_2", "REQUISITIONER", "SALESPERSON", "SALESPERSON_1", "SHIPPED", "Signature1", "SUBTOTAL_8"];

const formTools: [string, React.ReactNode][] = [
  ["Campo de texto", <TextFieldIcon />], ["Botón de opción", <RadioIcon />], ["Casilla", <CheckIcon />], ["Desplegable", <ComboIcon />],
  ["Lista", <ListIcon />], ["Botón", <OkIcon />], ["Imagen", <ImageIcon />], ["Fecha", <CalendarIcon />], ["Firma", <SignIcon />], ["Copiar", <CopyIcon />],
];

const Picker = ({ id, label, value, marked }: { id: string; label: string; value: string; marked?: boolean }) => (
  <SelectBox>
    <Select id={id} aria-label={label} defaultValue={value}><option>{value}</option></Select>
    <Chevron />
    {marked && <SelectMark />}
  </SelectBox>
);

const NumberField = ({ id, value, cut }: { id: string; value: string; cut?: boolean }) => (
  <NumberBox $cut={cut}>
    <input id={id} defaultValue={value} />
    <Stepper>
      <StepButton aria-label="Aumentar"><Chevron dir="up" /></StepButton>
      <StepButton aria-label="Reducir"><Chevron /></StepButton>
    </Stepper>
  </NumberBox>
);

export default function App() {
  const [checked, setChecked] = useState<string[]>(["QUANTITY"]);
  const toggle = (n: string) => setChecked((s) => (s.includes(n) ? s.filter((x) => x !== n) : [...s, n]));

  return (
    <Shell>
      <GlobalStyle />
      <TitleBar>
        <button aria-label="Inicio"><HomeIcon /></button>
        <Tabs>
          <Tab>UPDF Cloud<button aria-label="Cerrar UPDF Cloud"><Cross color="#777" /></button></Tab>
          <VLine $h={18} />
          <Tab $active>forms-samples*<button aria-label="Cerrar forms-samples"><Cross /></button></Tab>
          <NewTab aria-label="Nueva pestaña"><Icon w={18} h={18} color="#777" sw={1.5}><path d="M9 0V18M0 9H18" /></Icon></NewTab>
        </Tabs>
        <WindowGroup>
          <WindowButton aria-label="Más"><Chevron size={16} /></WindowButton>
          <WindowButton aria-label="Notificaciones"><BellIcon /></WindowButton>
          <WindowButton aria-label="Cuenta"><Avatar>I</Avatar></WindowButton>
        </WindowGroup>
        <WindowSep />
        <WindowGroup>
          <WindowButton aria-label="Minimizar"><Icon w={22} h={2}><path d="M0 1H22" /></Icon></WindowButton>
          <WindowButton aria-label="Maximizar"><Icon w={22} h={18}><rect x="1" y="1" width="20" height="16" /></Icon></WindowButton>
          <WindowButton aria-label="Cerrar"><Cross size={18} /></WindowButton>
        </WindowGroup>
      </TitleBar>

      <Body>
        <LeftPanel>
          <Rail>
            <RailButton aria-label="Vistas"><GridIcon /></RailButton>
            <RailLine />
            <RailButton aria-label="Buscar"><SearchIcon /></RailButton>
            <RailButton $active aria-label="Miniaturas"><PageIcon /></RailButton>
            <RailButton aria-label="Marcadores"><BookmarkIcon /></RailButton>
            <RailButton aria-label="Comentarios"><CommentIcon /></RailButton>
            <RailButton aria-label="Adjuntos"><ClipIcon /></RailButton>
            <RailButton $last aria-label="Temas"><SwatchIcon /></RailButton>
          </Rail>
          <Thumbs>
            <ThumbHead>
              <Handle><span /><span /><span /></Handle>
              <ThumbTitle><Heading>Miniaturas</Heading><button aria-label="Fijar"><PinIcon /></button></ThumbTitle>
            </ThumbHead>
            <ThumbList>
              <figure>
                <Sheet $h={120} $cut>
                  <TicketPage>
                    <TicketTop />
                    Priority Level:
                    <TicketBox>High<br />Medium<br />Low</TicketBox>
                    <TicketActions><span>Submit</span><span>Clear Form</span></TicketActions>
                  </TicketPage>
                </Sheet>
                <Caption>4<button aria-label="Opciones de página 4"><Dots /></button></Caption>
              </figure>
              <figure>
                <Sheet $h={346}>
                  <FeedbackPage>
                    <FTitle>Customer Feedback Form</FTitle>
                    <FQuestion $size={8} $mt={10}>1. Personal Information</FQuestion>
                    <FLine>Name:<span /></FLine>
                    <FLine $ruled>Email:<span /></FLine>
                    <FQuestion $size={9} $mt={7}>2. How did you hear about us?</FQuestion>
                    <FOptions>
                      <FOption>Search engine (Google/Bing/etc.)</FOption>
                      <FOption $round>Social media</FOption>
                      <FOption $round>Friend's recommendation</FOption>
                      <FOption $round>Advertisement</FOption>
                      <FOption $round>Other: ___________</FOption>
                    </FOptions>
                    <FQuestion $size={9} $mt={0}>3. Which feature do you use most often?</FQuestion>
                    <FSelect><span>Convert PDF</span><span>▾</span></FSelect>
                  </FeedbackPage>
                </Sheet>
                <Caption>5<button aria-label="Opciones de página 5"><Dots /></button></Caption>
              </figure>
              <figure>
                <Sheet $h={315} $selected><Invoice /></Sheet>
                <Caption>6<button aria-label="Opciones de página 6"><Dots /></button></Caption>
              </figure>
            </ThumbList>
          </Thumbs>
        </LeftPanel>

        <Stage>
          <Paper><Invoice editing /></Paper>

          <FloatRow>
            <Bar $w={186}><ToolsButton><ToolboxIcon /><Heading as="span">Herramientas</Heading></ToolsButton></Bar>
            <Bar $w={810}>
              <PointerButton aria-label="Seleccionar"><PointerIcon /></PointerButton>
              <button aria-label="Más modos"><Chevron /></button>
              <SmallSep />
              <BarTools>
                {formTools.map(([name, icon]) => <ToolButton key={name} aria-label={name}>{icon}</ToolButton>)}
                <ToolButton $gap aria-label="Organizar"><GridIcon wide /></ToolButton>
                <ToolButton aria-label="Más herramientas"><Icon w={16} h={6}><circle cx="3" cy="3" r="2.4" fill="#fff" stroke="none" /><circle cx="12" cy="3" r="2.4" fill="#fff" stroke="none" /></Icon></ToolButton>
              </BarTools>
            </Bar>
            <SaveBar $w={142}>
              <button aria-label="Guardar"><SaveIcon /></button>
              <button aria-label="Opciones de guardado"><Chevron /></button>
              <button aria-label="UPDF AI"><AiIcon /></button>
            </SaveBar>
          </FloatRow>

          <FloatRow $bottom>
            <PagerBar $w={180}>
              <button aria-label="Página anterior"><Icon w={10} h={18}><path d="M9 1L1.5 9L9 17" /></Icon></button>
              <button aria-label="Ir a página"><Dots /></button>
              <button aria-label="Página siguiente"><Icon w={10} h={18} color="#6a696b"><path d="M1 1L8.5 9L1 17" /></Icon></button>
            </PagerBar>
            <ViewBar $w={651}>
              <RoundButton aria-label="Contraer"><Icon w={6} h={10} sw={2}><path d="M1 1L5 5L1 9" /></Icon></RoundButton>
              <ViewTools>
                <button aria-label="Vista de lectura"><BookIcon /></button>
                <button aria-label="Presentación"><PresentIcon /></button>
              </ViewTools>
              <SmallSep />
            </ViewBar>
          </FloatRow>

          <Dialog role="dialog" aria-label="Seleccionar campos para el cálculo">
            <DialogHead><Heading $size={17}>Seleccionar campos para el cálculo</Heading><button aria-label="Cerrar diálogo"><Cross size={18} /></button></DialogHead>
            <FieldBox>
              <SelectAll>
                <FieldRow><Check type="checkbox" checked={checked.length === fieldNames.length} onChange={(e) => setChecked(e.target.checked ? fieldNames : [])} />Seleccionar todo</FieldRow>
              </SelectAll>
              <FieldList>
                {fieldNames.map((n) => (
                  <FieldRow key={n}>
                    <Check type="checkbox" checked={checked.includes(n)} onChange={() => toggle(n)} />
                    {n}
                    {n === "QUANTITY" && <RowMark />}
                  </FieldRow>
                ))}
              </FieldList>
            </FieldBox>
            <ArrowMark width="94" height="56" viewBox="0 0 94 56" fill={c.mark} aria-hidden="true">
              <path d="M0 0L44 2L37 16L94 48L90 54L33 23L25 36Z" />
            </ArrowMark>
          </Dialog>
        </Stage>

        <Props>
          <PropsBody>
            <PropsTitle>Propiedades</PropsTitle>
            <Segments>
              <Segment>General</Segment>
              <Segment $active>Estilo</Segment>
              <Segment>Acción</Segment>
            </Segments>
            <Section>
              <SectionHead $top={12} $bottom={11}><Heading>Alineación</Heading></SectionHead>
              <Segments $wide>
                <Segment $active aria-label="Izquierda"><AlignIcon rows={[[0, 24], [0, 15], [0, 24], [0, 15]]} /></Segment>
                <Segment aria-label="Centro"><AlignIcon rows={[[0, 24], [4, 20], [0, 24], [4, 20]]} /></Segment>
                <Segment aria-label="Derecha"><AlignIcon rows={[[0, 24], [9, 24], [0, 24], [9, 24]]} /></Segment>
              </Segments>
            </Section>
            <Section>
              <SectionHead $top={25} $bottom={16}><Heading>Cambiar tamaño</Heading></SectionHead>
              <Picker id="unit" label="Cambiar tamaño" value="Puntos" />
              <SizeRow>
                <SizeLabel htmlFor="w">W</SizeLabel><NumberField id="w" value="66.96" />
                <SizeLabel htmlFor="h" $end>H</SizeLabel><NumberField id="h" value="17.54" cut />
              </SizeRow>
            </Section>
            <Section>
              <SectionHead $top={25} $bottom={12}><Heading>Formato</Heading><OptionsButton aria-label="Opciones de formato"><SlidersIcon color="#6f6e70" /></OptionsButton></SectionHead>
              <Picker id="format" label="Formato" value="Ninguno" />
            </Section>
            <Section $last>
              <SectionHead $top={24} $bottom={12}><Heading>Cálculo</Heading><OptionsButton $active aria-label="Opciones de cálculo"><SlidersIcon /></OptionsButton></SectionHead>
              <Picker id="calc" label="Cálculo" value="Multiplicación (x)" marked />
              <Note>El valor es el/la Multiplicación (x) de estos campos</Note>
              <FieldsUsed><UsedField>QUANTITY</UsedField><UsedField>UNIT</UsedField></FieldsUsed>
            </Section>
          </PropsBody>
          <Scroller />
        </Props>
      </Body>
    </Shell>
  );
}
